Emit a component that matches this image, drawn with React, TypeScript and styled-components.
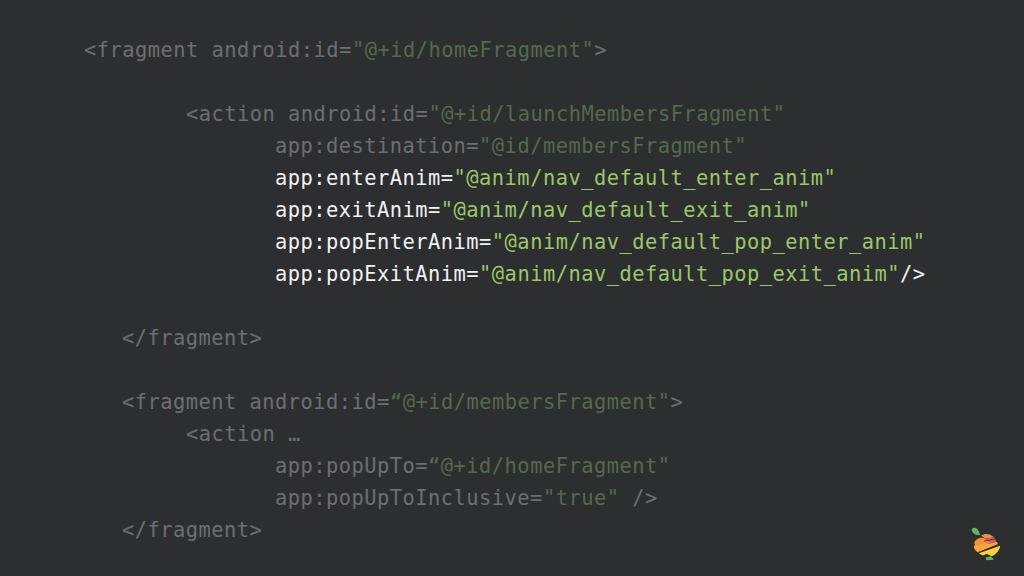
import React from "react";
import styled, { createGlobalStyle } from "styled-components";

const Global = createGlobalStyle`
html, body {
    margin: 0;
    padding: 0;
    background: #2d2e30;
}
`

const Slide = styled.div`
position: relative;
width: 1024px;
height: 576px;
overflow: hidden;
box-sizing: border-box;
padding-top: 34px;
background: #2d2e30;
font-family: "DejaVu Sans Mono", "Liberation Mono", monospace;
font-size: 20.4px;
letter-spacing: 0.48px;
line-height: 32px;
white-space: pre;
`

const Line = styled.div<{ $indent?: number; $on?: boolean }>`
height: 32px;
padding-left: ${({ $indent }) => $indent ?? 84}px;
color: ${({ $on }) => ($on ? "#f1f2f2" : "#6d6e70")};
`

const Str = styled.span<{ $on?: boolean }>`
color: ${({ $on }) => ($on ? "#9bc768" : "#55694b")};
`

const Logo = styled.svg`
position: absolute;
right: 14px;
bottom: 9px;
width: 48px;
height: 48px;
`

type Row = { indent?: number; on?: boolean; text?: string; str?: string; tail?: string };

const rows: Row[] = [
    { indent: 84, text: "<fragment android:id=", str: "\"@+id/homeFragment\"", tail: ">" },
    {},
    { indent: 186, text: "<action android:id=", str: "\"@+id/launchMembersFragment\"" },
    { indent: 275, text: "app:destination=", str: "\"@id/membersFragment\"" },
    { indent: 275, on: true, text: "app:enterAnim=", str: "\"@anim/nav_default_enter_anim\"" },
    { indent: 275, on: true, text: "app:exitAnim=", str: "\"@anim/nav_default_exit_anim\"" },
    { indent: 275, on: true, text: "app:popEnterAnim=", str: "\"@anim/nav_default_pop_enter_anim\"" },
    { indent: 275, on: true, text: "app:popExitAnim=", str: "\"@anim/nav_default_pop_exit_anim\"", tail: "/>" },
    {},
    { indent: 122, text: "</fragment>" },
    {},
    { indent: 122, text: "<fragment android:id=", str: "“@+id/membersFragment\"", tail: ">" },
    { indent: 186, text: "<action …" },
    { indent: 275, text: "app:popUpTo=", str: "“@+id/homeFragment\"" },
    { indent: 275, text: "app:popUpToInclusive=", str: "\"true\"", tail: " />" },
    { indent: 122, text: "</fragment>" },
];

export default function App() {
    return (
        <Slide>
            <Global />
            {rows.map((row, i) => (
                <Line key={i} $indent={row.indent} $on={row.on}>
                    {row.text}
                    {row.str && <Str $on={row.on}>{row.str}</Str>}
                    {row.tail}
                </Line>
            ))}
            {/* viewBox follows the 3x crop of the reference corner */}
            <Logo viewBox="0 0 126 126">
                <path d="M25 27 C32 18 44 24 47 42 C36 44 27 38 25 27 Z" fill="#5cb85c" />
                <path d="M50 44 C60 36 74 38 84 48 L62 52 Z" fill="#ef8f45" />
                <path d="M64 51 L84 47 L90 60 L72 64 Z" fill="#e2566a" />
                <path d="M32 62 C38 50 50 46 62 52 L74 63 L36 76 Z" fill="#f2903c" />
                <path d="M31 70 L72 64 L92 60 L94 66 L42 88 C36 84 31 78 31 70 Z" fill="#f6a83a" />
                <path d="M44 90 L100 70 C99 82 90 92 78 98 L66 92 L54 96 Z" fill="#f8d33c" />
                <path d="M62 101 L76 98 L84 107 L64 108 Z" fill="#66b45a" />
                <path d="M58 58 L88 52 M42 88 L96 67 M62 92 L70 96" fill="none" stroke="#2d2e30" strokeWidth="2" />
            </Logo>
        </Slide>
    );
}
